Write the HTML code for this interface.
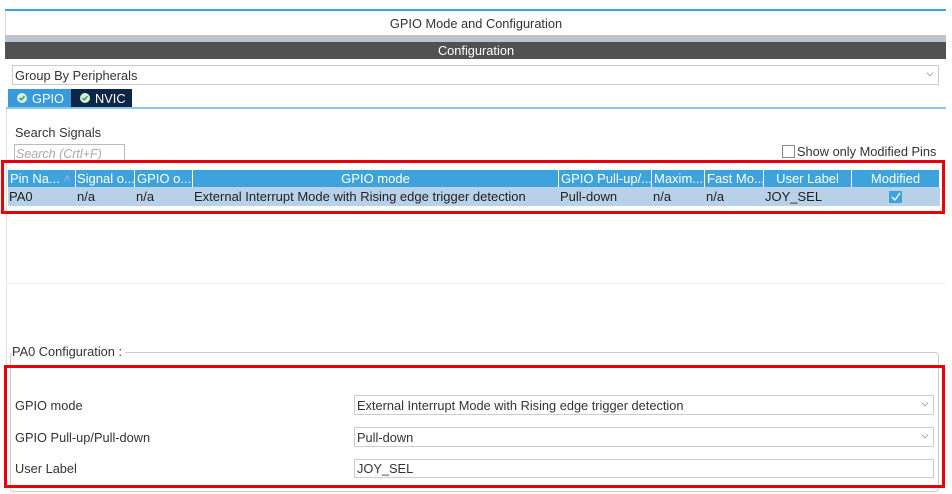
<!DOCTYPE html>
<html><head><style>
*{margin:0;padding:0;box-sizing:border-box}
body{width:952px;height:494px;background:#fff;position:relative;overflow:hidden;font-family:"Liberation Sans",Arial,sans-serif;font-size:12px;color:#333}
.a{position:absolute}
.t{position:absolute;white-space:nowrap;line-height:1;font-size:12.8px}
.sel{position:absolute;border:1px solid #ccc;background:#fff}
.chev{position:absolute;right:5px;top:4px;width:6px;height:6px;border-right:1px solid #999;border-bottom:1px solid #999;transform:rotate(45deg) scale(.8)}
.th{position:absolute;top:170px;height:17px;background:#3ea3dc;color:#fff;font-size:13px;line-height:18px;text-align:center;border-right:1px solid #fff;overflow:hidden;white-space:nowrap}
.td{position:absolute;top:187px;height:19px;line-height:20px;font-size:13px;color:#222;white-space:nowrap;padding-left:1px}
</style></head><body>
<div class="a" style="left:5px;top:9px;width:941px;height:2px;background:#3ea3dc"></div>
<div class="a" style="left:5px;top:11px;width:1px;height:24px;background:#ddd"></div>
<div class="t" style="left:0;width:952px;text-align:center;top:18px">GPIO Mode and Configuration</div>
<div class="a" style="left:5px;top:35px;width:941px;height:7px;background:#bcc5cb"></div>
<div class="a" style="left:5px;top:42px;width:941px;height:17px;background:#505150"></div>
<div class="t" style="left:0;width:952px;text-align:center;top:45px;color:#fff">Configuration</div>
<div class="sel" style="left:12px;top:65px;width:927px;height:20px"><div class="chev"></div></div>
<div class="t" style="left:15px;top:70px">Group By Peripherals</div>
<div class="a" style="left:8px;top:89px;width:63px;height:19px;background:#3a9ad9"></div>
<div class="a" style="left:71px;top:89px;width:61px;height:19px;background:#0d2546"></div>
<svg class="a" style="left:17px;top:93px" width="10" height="10"><circle cx="5" cy="5" r="5" fill="#d6f0dd"/><path d="M2.5 5 L4.3 6.8 L7.5 3.3" stroke="#3aa55a" stroke-width="1.5" fill="none"/></svg>
<svg class="a" style="left:80px;top:93px" width="10" height="10"><circle cx="5" cy="5" r="5" fill="#d6f0dd"/><path d="M2.5 5 L4.3 6.8 L7.5 3.3" stroke="#3aa55a" stroke-width="1.5" fill="none"/></svg>
<div class="t" style="left:32px;top:93px;color:#fff">GPIO</div>
<div class="t" style="left:95px;top:93px;color:#fff">NVIC</div>
<div class="a" style="left:6px;top:107px;width:940px;height:2px;background:#8cc8ea"></div>
<div class="a" style="left:6px;top:109px;width:1px;height:380px;background:#ddd"></div>
<div class="t" style="left:15px;top:127px">Search Signals</div>
<div class="a" style="left:14px;top:144px;width:111px;height:18px;border:1px solid #bbb"></div>
<div class="t" style="left:16px;top:148px;color:#aaa;font-style:italic;font-size:12.5px">Search (Crtl+F)</div>
<div class="a" style="left:782px;top:145px;width:13px;height:13px;border:1px solid #888;background:#fff"></div>
<div class="t" style="left:797px;top:146px">Show only Modified Pins</div>

<div class="th" style="left:8px;width:68px;text-align:left;padding-left:2px">Pin Na... <span style="color:#aad">˄</span></div>
<div class="th" style="left:76px;width:59px;text-align:left;padding-left:1px">Signal o...</div>
<div class="th" style="left:135px;width:58px;text-align:left;padding-left:2px">GPIO o...</div>
<div class="th" style="left:193px;width:366px">GPIO mode</div>
<div class="th" style="left:559px;width:93px;text-align:left;padding-left:2px">GPIO Pull-up/...</div>
<div class="th" style="left:652px;width:53px;text-align:left;padding-left:2px">Maxim...</div>
<div class="th" style="left:705px;width:59px;text-align:left;padding-left:2px">Fast Mo...</div>
<div class="th" style="left:764px;width:88px">User Label</div>
<div class="th" style="left:852px;width:88px">Modified</div>
<div class="a" style="left:8px;top:187px;width:932px;height:19px;background:#b8d0e8"></div>
<div class="td" style="left:8px">PA0</div>
<div class="td" style="left:76px">n/a</div>
<div class="td" style="left:135px">n/a</div>
<div class="td" style="left:193px">External Interrupt Mode with Rising edge trigger detection</div>
<div class="td" style="left:559px">Pull-down</div>
<div class="td" style="left:652px">n/a</div>
<div class="td" style="left:705px">n/a</div>
<div class="td" style="left:764px">JOY_SEL</div>
<div class="a" style="left:889px;top:191px;width:13px;height:12px;background:#3ea3dc"></div>
<svg class="a" style="left:889px;top:191px" width="13" height="12"><path d="M3 6 L6 9 L11 2" stroke="#fff" stroke-width="1.3" fill="none"/></svg>
<div class="a" style="left:1px;top:160px;width:944px;height:54px;border:3px solid #e8000b"></div>

<div class="a" style="left:6px;top:283px;width:940px;height:1px;background:#eee"></div>
<div class="a" style="left:10px;top:352px;width:929px;height:140px;border:1px solid #ccc;border-radius:4px"></div>
<div class="t" style="left:12px;top:346px;background:#fff;padding-right:3px">PA0 Configuration :</div>
<div class="t" style="left:15px;top:400px">GPIO mode</div>
<div class="t" style="left:15px;top:432px">GPIO Pull-up/Pull-down</div>
<div class="t" style="left:15px;top:463px">User Label</div>
<div class="sel" style="left:354px;top:395px;width:580px;height:20px"><div class="chev"></div></div>
<div class="sel" style="left:354px;top:427px;width:580px;height:20px"><div class="chev"></div></div>
<div class="sel" style="left:354px;top:459px;width:580px;height:19px"></div>
<div class="t" style="left:357px;top:400px">External Interrupt Mode with Rising edge trigger detection</div>
<div class="t" style="left:357px;top:432px">Pull-down</div>
<div class="t" style="left:357px;top:463px">JOY_SEL</div>
<div class="a" style="left:4px;top:365px;width:941px;height:123px;border:3px solid #e8000b"></div>
</body></html>
